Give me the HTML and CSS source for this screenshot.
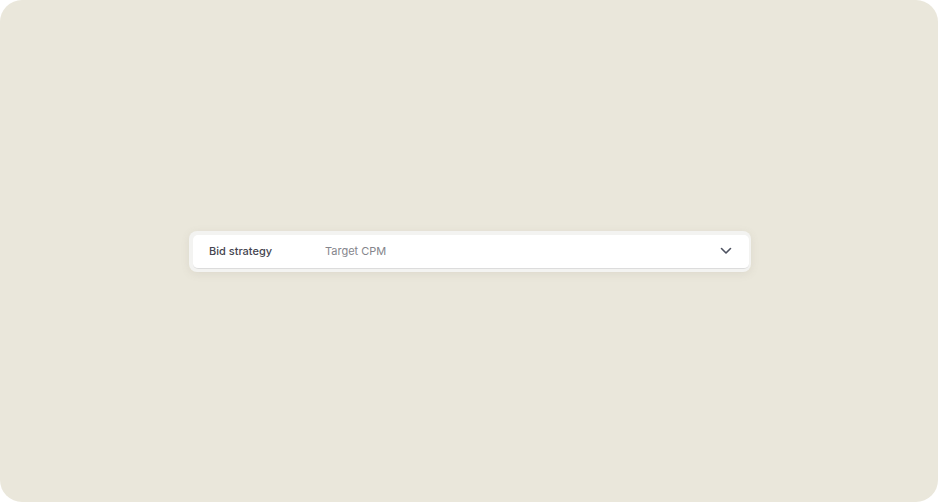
FILE: index.html
```html
<!DOCTYPE html>
<html lang="en">
<head>
  <meta charset="UTF-8">
  <meta name="viewport" content="width=device-width, initial-scale=1.0">
  <title>Bid strategy</title>
  <link rel="stylesheet" href="styles.css">
</head>
<body>
  <div class="canvas">
    <div class="field-wrap">
      <div class="field">
        <span class="field-label">Bid strategy</span>
        <span class="field-value">Target CPM</span>
        <svg class="chevron" width="12" height="8" viewBox="0 0 12 8">
          <path d="M1.5 1.5 L6 6 L10.5 1.5" fill="none" stroke="#4d5160" stroke-width="1.6" stroke-linecap="round" stroke-linejoin="round"/>
        </svg>
      </div>
    </div>
  </div>
</body>
</html>
```

FILE: styles.css
```css
html, body {
  margin: 0;
  padding: 0;
  background: #ffffff;
}

.canvas {
  width: 938px;
  height: 502px;
  box-sizing: border-box;
  padding-left: 2px;
  background-color: #eae7db;
  border-radius: 22px;
  display: flex;
  justify-content: center;
  align-items: center;
  font-family: Inter, "Noto Sans", sans-serif;
}

.field-wrap {
  width: 556px;
  padding: 4px 2px 3px 4px;
  background-color: #f3f3f1;
  border-radius: 8px;
  box-shadow: 0 2px 8px rgba(120, 115, 95, 0.12);
}

.field {
  display: flex;
  align-items: center;
  height: 33px;
  padding: 0 17px 0 16px;
  background-color: #ffffff;
  border-radius: 5px;
  border-bottom: 1px solid #dcdcdc;
  font-size: 11px;
}

.field-label {
  width: 116px;
  color: #454550;
  font-weight: 500;
}

.field-value {
  flex: 1;
  color: #85858c;
}

.chevron {
  display: block;
}
```
